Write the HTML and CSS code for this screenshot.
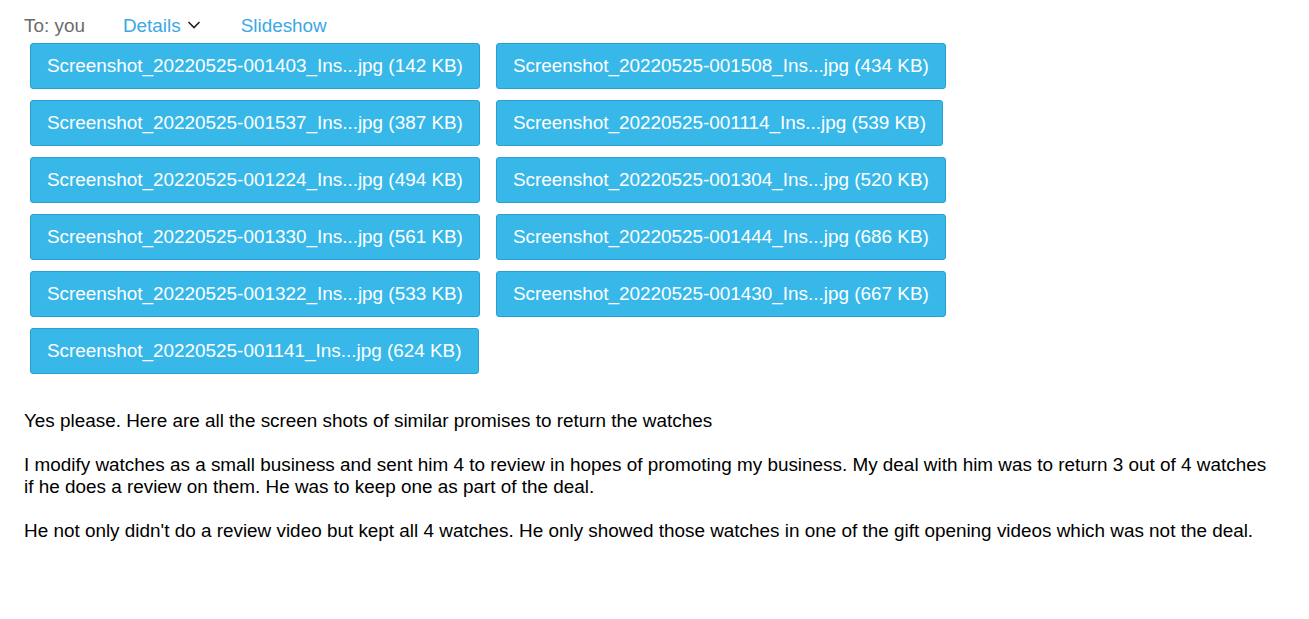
FILE: index.html
```html
<!DOCTYPE html>
<html>
<head>
<meta charset="utf-8">
<link rel="stylesheet" href="styles.css">
</head>
<body>
<div class="page">
  <div class="header">
    <span class="to">To: you</span>
    <a class="link details">Details <svg class="chev" width="14" height="10" viewBox="0 0 14 10"><path d="M1.5 2 L7 7.5 L12.5 2" fill="none" stroke="#222" stroke-width="1.6"/></svg></a>
    <a class="link">Slideshow</a>
  </div>
  <div class="attachments">
    <span class="att">Screenshot_20220525-001403_Ins...jpg (142 KB)</span>
    <span class="att">Screenshot_20220525-001508_Ins...jpg (434 KB)</span>
    <span class="att">Screenshot_20220525-001537_Ins...jpg (387 KB)</span>
    <span class="att">Screenshot_20220525-001114_Ins...jpg (539 KB)</span>
    <span class="att">Screenshot_20220525-001224_Ins...jpg (494 KB)</span>
    <span class="att">Screenshot_20220525-001304_Ins...jpg (520 KB)</span>
    <span class="att">Screenshot_20220525-001330_Ins...jpg (561 KB)</span>
    <span class="att">Screenshot_20220525-001444_Ins...jpg (686 KB)</span>
    <span class="att">Screenshot_20220525-001322_Ins...jpg (533 KB)</span>
    <span class="att">Screenshot_20220525-001430_Ins...jpg (667 KB)</span>
    <span class="att">Screenshot_20220525-001141_Ins...jpg (624 KB)</span>
  </div>
  <div class="body">
    <p>Yes please. Here are all the screen shots of similar promises to return the watches</p>
    <p>I modify watches as a small business and sent him 4 to review in hopes of promoting my business. My deal with him was to return 3 out of 4 watches if he does a review on them. He was to keep one as part of the deal.</p>
    <p>He not only didn't do a review video but kept all 4 watches. He only showed those watches in one of the gift opening videos which was not the deal.</p>
  </div>
</div>
</body>
</html>
```
FILE: styles.css
```css
html, body {
  margin: 0;
  padding: 0;
  background: #fff;
}
body {
  font-family: "Liberation Sans", Arial, sans-serif;
  color: #000;
}
.page {
  padding: 14px 24px 0 24px;
}
.header {
  display: flex;
  align-items: center;
  font-size: 18.9px;
  line-height: 24px;
  height: 24px;
}
.to {
  color: #6b6b6b;
  margin-right: 38px;
}
.link {
  color: #3aa9e4;
  text-decoration: none;
}
.details {
  display: inline-flex;
  align-items: center;
  margin-right: 40px;
}
.chev {
  margin-left: 6px;
  margin-top: -2px;
}
.attachments {
  display: flex;
  flex-wrap: wrap;
  width: 940px;
  column-gap: 16px;
  row-gap: 11px;
  margin: 5px 0 0 6px;
}
.att {
  display: inline-block;
  box-sizing: border-box;
  height: 46px;
  line-height: 44px;
  padding: 0 16px;
  font-size: 18.9px;
  color: #fff;
  background: #37b8e9;
  border: 1px solid #2a9fd0;
  border-radius: 3px;
  white-space: nowrap;
}
.body {
  margin-top: 36px;
  font-size: 18.9px;
  line-height: 22px;
  width: 1252px;
}
.body p {
  margin: 0 0 22px 0;
}
```
